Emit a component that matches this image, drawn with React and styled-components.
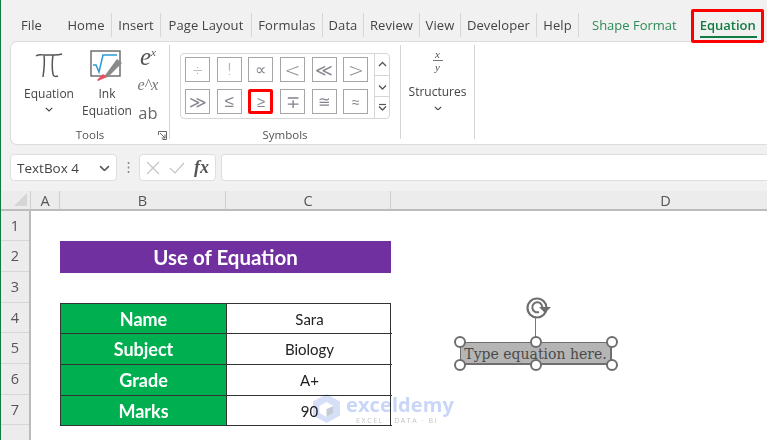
import React from "react";
import styled, { createGlobalStyle } from "styled-components";

const Global = createGlobalStyle`
  html, body {
    margin: 0;
    padding: 0;
    background: #f1f1f1;
    overflow: hidden;
  }
  * {
    box-sizing: border-box;
  }
`;

const tabs = [
  { label: "File", width: 59 },
  { label: "Home", width: 51, sep: true },
  { label: "Insert", width: 49, sep: true },
  { label: "Page Layout", width: 91, sep: true },
  { label: "Formulas", width: 71, sep: true },
  { label: "Data", width: 41, sep: true },
  { label: "Review", width: 56, sep: true },
  { label: "View", width: 41, sep: true },
  { label: "Developer", width: 76, sep: true },
  { label: "Help", width: 42, sep: true },
];

const symbols = [
  { s: "÷", size: 14 },
  { s: "!", size: 15 },
  { s: "∝", size: 16 },
  { s: "<", size: 19 },
  { s: "≪", size: 17 },
  { s: ">", size: 19 },
  { s: "≫", size: 17 },
  { s: "≤", size: 17 },
  { s: "≥", size: 15, hot: true },
  { s: "∓", size: 17 },
  { s: "≅", size: 15 },
  { s: "≈", size: 14 },
];
const rowHeights = [30, 31, 31, 30, 31, 31, 30, 20];
const columns = [
  { label: "A", width: 29 },
  { label: "B", width: 166 },
  { label: "C", width: 165 },
  { label: "D", width: 550 },
];
const tableRows = [
  ["Name", "Sara"],
  ["Subject", "Biology"],
  ["Grade", "A+"],
  ["Marks", "90"],
];

const Page = styled.div`
  width: 767px;
  height: 440px;
  overflow: hidden;
  position: relative;
  border-left: 1px solid #107c41;
  background: #f1f1f1;
  font-family: "Open Sans", "Liberation Sans", sans-serif;
  color: #444;
`;

const TabBar = styled.div`
  height: 41px;
  display: flex;
  align-items: flex-end;
  padding-left: 1px;
  padding-bottom: 4px;
`;

const Tab = styled.div`
  width: ${(p) => p.$w}px;
  height: 24px;
  flex: none;
  display: flex;
  align-items: center;
  justify-content: center;
  font-size: 13px;
  letter-spacing: 0.1px;
  white-space: nowrap;
  border-right: ${(p) => (p.$sep ? "1px solid #d6d6d6" : "none")};
`;

const ContextTab = styled.div`
  margin-left: ${(p) => p.$gap}px;
  height: 24px;
  position: relative;
  display: flex;
  align-items: center;
  font-size: 13px;
  color: #2e8b57;
  white-space: nowrap;
`;

const ActiveTab = styled(ContextTab)`
  color: #107c41;
  font-weight: 600;
  &::after {
    content: "";
    position: absolute;
    left: 0;
    right: -1px;
    bottom: -1px;
    height: 2px;
    background: #107c41;
  }
`;

const RedBox = styled.div`
  position: absolute;
  left: 690px;
  top: 9px;
  width: 73px;
  height: 34px;
  border: 3px solid #f00;
  border-radius: 2px;
`;

const Ribbon = styled.div`
  height: 104px;
  margin-left: 9px;
  background: #fff;
  border: 1px solid #dcdcdc;
  border-right: none;
  border-radius: 7px 0 0 7px;
  display: flex;
  padding-top: 3px;
`;

const Group = styled.div`
  width: ${(p) => p.$w}px;
  height: 94px;
  flex: none;
  position: relative;
  border-right: 1px solid #d4d4d4;
`;

const GroupBody = styled.div`
  height: 84px;
  padding: 2px 0 0 ${(p) => p.$inset || 0}px;
  display: flex;
`;

const GroupLabel = styled.div`
  height: 10px;
  font-size: 11.5px;
  text-align: center;
  line-height: 12px;
  color: #555;
`;

const Launcher = styled.svg`
  position: absolute;
  right: 2px;
  bottom: -1px;
`;

const BigButton = styled.div`
  width: ${(p) => p.$w}px;
  display: flex;
  flex-direction: column;
  align-items: center;
  font-size: 12px;
  line-height: 17px;
  color: #444;
`;

const IconSlot = styled.div`
  height: ${(p) => p.$h}px;
  display: flex;
  align-items: ${(p) => (p.$top ? "flex-start" : "center")};
  justify-content: center;
`;

const MathStack = styled.div`
  width: 30px;
  margin: -4px 0 0 2px;
  display: flex;
  flex-direction: column;
  align-items: center;
`;

const MathItem = styled.div`
  height: 28px;
  font-family: ${(p) => (p.$plain ? '"Open Sans", sans-serif' : '"Liberation Serif", serif')};
  font-style: ${(p) => (p.$plain ? "normal" : "italic")};
  font-size: ${(p) => p.$size}px;
  color: ${(p) => p.$color};
  line-height: 28px;
  white-space: nowrap;
  sup {
    font-size: 11px;
    line-height: 0;
  }
`;

const Gallery = styled.div`
  margin: 6px 0 0 10px;
  width: 210px;
  height: 66px;
  display: flex;
  border: 1px solid #d6d6d6;
  border-radius: 4px;
`;

const SymbolGrid = styled.div`
  width: 193px;
  padding: 3px 0 0 4px;
  display: grid;
  grid-template-columns: repeat(6, 25px);
  grid-template-rows: repeat(2, 25px);
  column-gap: 6.7px;
  row-gap: 7px;
`;

const SymbolButton = styled.div`
  display: flex;
  align-items: center;
  justify-content: center;
  font-family: "DejaVu Sans", sans-serif;
  font-size: ${(p) => p.$size}px;
  font-weight: 200;
  color: #85858f;
  background: #fff;
  border: ${(p) => (p.$hot ? "3px solid #f00" : "1px solid #a6a6a6")};
  border-radius: ${(p) => (p.$hot ? 2 : 0)}px;
`;

const ScrollColumn = styled.div`
  flex: 1;
  display: flex;
  flex-direction: column;
  border-left: 1px solid #d6d6d6;
`;

const ScrollCell = styled.div`
  flex: 1;
  display: flex;
  align-items: center;
  justify-content: center;
  border-bottom: ${(p) => (p.$last ? "none" : "1px solid #d6d6d6")};
`;

const Fraction = styled.div`
  padding-top: 2px;
  display: flex;
  flex-direction: column;
  align-items: center;
  font-family: "Liberation Serif", serif;
  font-style: italic;
  font-size: 11px;
  line-height: 10px;
  color: #555;
`;

const FractionBar = styled.span`
  width: 10px;
  height: 1px;
  background: #777;
  margin: 1px 0;
`;

const FormulaBar = styled.div`
  height: 46px;
  padding: 9px 0 0 9px;
  display: flex;
  align-items: flex-start;
`;

const NameBox = styled.div`
  width: 107px;
  height: 27px;
  background: #fff;
  border: 1px solid #dedede;
  border-radius: 4px;
  display: flex;
  align-items: center;
  justify-content: space-between;
  padding: 1px 6px 0 6px;
  font-size: 13.5px;
  color: #444;
`;

const Grip = styled.div`
  width: 22px;
  height: 27px;
  display: flex;
  align-items: center;
  justify-content: center;
`;

const FxBox = styled.div`
  width: 77px;
  height: 27px;
  background: #fff;
  border: 1px solid #dedede;
  border-radius: 4px;
  display: flex;
  align-items: center;
  gap: 9px;
  padding-left: 6px;
  font-family: "Liberation Serif", serif;
  font-style: italic;
  font-weight: 700;
  font-size: 18px;
  color: #555;
`;

const FormulaInput = styled.div`
  flex: 1;
  height: 27px;
  margin-left: 5px;
  background: #fff;
  border: 1px solid #dedede;
  border-right: none;
  border-radius: 4px 0 0 4px;
`;

const ColumnHeaders = styled.div`
  height: 20px;
  display: flex;
  background: #ececec;
  border-bottom: 2px solid #bcbcbc;
`;

const Corner = styled.div`
  width: 30px;
  flex: none;
  display: flex;
  align-items: flex-end;
  justify-content: flex-end;
  padding: 0 3px 3px 0;
  border-right: 1px solid #cfcfcf;
`;

const ColumnHead = styled.div`
  width: ${(p) => p.$w}px;
  flex: none;
  text-align: center;
  font-size: 14.5px;
  line-height: 19px;
  color: #555;
  border-right: 1px solid #cfcfcf;
`;

const SheetArea = styled.div`
  display: flex;
  height: 229px;
`;

const RowHeaders = styled.div`
  width: 30px;
  flex: none;
  background: #ececec;
  border-right: 2px solid #bcbcbc;
`;

const RowHead = styled.div`
  height: ${(p) => p.$h}px;
  line-height: ${(p) => p.$h - 1}px;
  text-align: center;
  font-size: 14.5px;
  color: #555;
  border-bottom: 1px solid #d6d6d6;
`;

const Sheet = styled.div`
  flex: 1;
  background: #fff;
  padding: 30px 0 0 29px;
`;

const TitleCell = styled.div`
  width: 331px;
  height: 32px;
  background: #7030a0;
  color: #fff;
  font-family: Lato, "Open Sans", sans-serif;
  font-weight: 700;
  font-size: 20.5px;
  line-height: 32px;
  text-align: center;
`;

const DataTable = styled.div`
  margin-top: 30px;
  width: 331px;
  display: grid;
  grid-template-columns: 166px 165px;
  grid-template-rows: 30px 31px 31px 30px;
  border: 1px solid #333;
  border-bottom: none;
`;

const HeadCell = styled.div`
  background: #00b050;
  color: #fff;
  font-family: Lato, "Open Sans", sans-serif;
  font-weight: 700;
  font-size: 18px;
  display: flex;
  align-items: center;
  justify-content: center;
  border-right: 1px solid #333;
  border-bottom: 1px solid #333;
`;

const ValueCell = styled.div`
  color: #222;
  font-family: Lato, "Open Sans", sans-serif;
  font-size: 15px;
  display: flex;
  align-items: center;
  justify-content: center;
  border-bottom: 1px solid #333;
`;

const Watermark = styled.div`
  position: absolute;
  left: 311px;
  top: 393px;
  display: flex;
  gap: 5px;
  mix-blend-mode: multiply;
  pointer-events: none;
`;

const WatermarkText = styled.div`
  display: flex;
  flex-direction: column;
`;

const WatermarkName = styled.div`
  margin-top: 1px;
  font-family: "Open Sans", sans-serif;
  font-weight: 700;
  font-size: 20px;
  line-height: 22px;
  letter-spacing: 0.1px;
  color: #c9d6f8;
`;

const WatermarkTag = styled.div`
  margin: 1px 0 0 10px;
  font-family: "Open Sans", sans-serif;
  font-size: 7px;
  line-height: 8px;
  letter-spacing: 1.6px;
  color: #c4c4c4;
`;

const TextBox = styled.div`
  position: absolute;
  left: 459px;
  top: 342px;
  width: 152px;
  height: 23px;
  background: #b5b5b5;
  border: 1px solid #6f6f6f;
  border-width: 1px 2px 2px 1px;
  font-family: "DejaVu Serif", serif;
  font-size: 14px;
  line-height: 22px;
  text-align: center;
  white-space: nowrap;
  color: #4a4a4a;
`;

const Handle = styled.span`
  position: absolute;
  left: ${(p) => p.$x}px;
  top: ${(p) => p.$y}px;
  width: 12px;
  height: 12px;
  background: #fff;
  border: 2px solid #6e6e6e;
  border-radius: 50%;
`;

const RotateStem = styled.span`
  position: absolute;
  left: 534px;
  top: 317px;
  width: 1px;
  height: 25px;
  background: #777;
`;

const RotateIcon = styled.svg`
  position: absolute;
  left: 525px;
  top: 296px;
`;

const Chevron = ({ size = 8, color = "#444" }) => (
  <svg width={size} height={size * 0.6} viewBox="0 0 10 6">
    <path d="M1 1l4 4 4-4" fill="none" stroke={color} strokeWidth="1.4" />
  </svg>
);

const PiIcon = () => (
  <svg width="28" height="26" viewBox="0 0 28 26">
    <path
      d="M1 3c3-2 6-1 9-1h9c3 0 5 0 8-1M9 2c1 7 0 15-1 22M18 2c-1 7-1 14 0 19 0 2 2 3 5 2"
      fill="none"
      stroke="#555"
      strokeWidth="1.5"
    />
  </svg>
);

const InkIcon = () => (
  <svg width="34" height="32" viewBox="0 0 34 32">
    <rect x="1" y="1" width="29" height="25" fill="#fff" stroke="#666" strokeWidth="1.4" />
    <path d="M3 15h3l3 7 4-17h14" fill="none" stroke="#2b9ad6" strokeWidth="1.5" />
    <path d="M27 9l5 4-14 14-5 1z" fill="#8a8a8a" />
    <path d="M13 24l4 3-9 4-1-1z" fill="#e8515f" />
  </svg>
);

const RotateGlyph = () => (
  <RotateIcon width="27" height="24" viewBox="0 0 27 24">
    <circle cx="11" cy="12" r="9.5" fill="none" stroke="#6e6e6e" strokeWidth="2.2" />
    <path d="M16 13a5 5 0 1 0-3 3" fill="none" stroke="#6e6e6e" strokeWidth="2" />
    <path d="M13 11h12l-6 6z" fill="#6e6e6e" />
  </RotateIcon>
);

const LogoMark = () => (
  <svg width="29" height="31" viewBox="0 0 29 31">
    <path d="M14.5 1L28 8.500v14L14.500 30 1 22.500v-14z" fill="#d5dff8" />
    <path d="M14.500 9l7 4v7l-7 4-7-4v-7z" fill="#fff" />
    <path d="M14.500 16l7-3v7l-7 4z" fill="#c6ccd6" />
  </svg>
);

const ScrollIcon = ({ kind }) => (
  <svg width="9" height="9" viewBox="0 0 9 9">
    {kind === "more" && <path d="M1 1.500h7" stroke="#555" strokeWidth="1.200" />}
    <path
      d={kind === "up" ? "M1 6l3.500-3.500L8 6" : "M1 3.500l3.500 3.500L8 3.500"}
      fill="none"
      stroke="#555"
      strokeWidth="1.300"
    />
  </svg>
);

export default function App() {
  return (
    <Page>
      <Global />
      <TabBar>
        {tabs.map((t) => (
          <Tab key={t.label} $w={t.width} $sep={t.sep}>
            {t.label}
          </Tab>
        ))}
        <ContextTab $gap={13}>Shape Format</ContextTab>
        <ActiveTab $gap={23}>Equation</ActiveTab>
      </TabBar>
      <RedBox />

      <Ribbon>
        <Group $w={159}>
          <GroupBody $inset={4}>
            <BigButton $w={68}>
              <IconSlot $h={38}>
                <PiIcon />
              </IconSlot>
              <span>Equation</span>
              <IconSlot $h={15}>
                <Chevron />
              </IconSlot>
            </BigButton>
            <BigButton $w={48}>
              <IconSlot $h={38}>
                <InkIcon />
              </IconSlot>
              <span>Ink</span>
              <span>Equation</span>
            </BigButton>
            <MathStack>
              <MathItem $size={25} $color="#555">
                e<sup>x</sup>
              </MathItem>
              <MathItem $size={16} $color="#777">
                e^x
              </MathItem>
              <MathItem $plain $size={16.5} $color="#666">
                ab
              </MathItem>
            </MathStack>
          </GroupBody>
          <GroupLabel>Tools</GroupLabel>
          <Launcher width="9" height="9" viewBox="0 0 9 9">
            <path d="M.5 4V.5H8.500V8.500H4.500M2 2l5 5M7 3.500V7H3.500" fill="none" stroke="#666" />
          </Launcher>
        </Group>

        <Group $w={231}>
          <GroupBody>
            <Gallery>
              <SymbolGrid>
                {symbols.map(({ s, size, hot }) => (
                  <SymbolButton key={s} $hot={hot} $size={size}>
                    {s}
                  </SymbolButton>
                ))}
              </SymbolGrid>
              <ScrollColumn>
                <ScrollCell>
                  <ScrollIcon kind="up" />
                </ScrollCell>
                <ScrollCell>
                  <ScrollIcon kind="down" />
                </ScrollCell>
                <ScrollCell $last>
                  <ScrollIcon kind="more" />
                </ScrollCell>
              </ScrollColumn>
            </Gallery>
          </GroupBody>
          <GroupLabel>Symbols</GroupLabel>
        </Group>

        <Group $w={74}>
          <GroupBody>
            <BigButton $w={74}>
              <IconSlot $h={36} $top>
                <Fraction>
                  <span>x</span>
                  <FractionBar />
                  <span>y</span>
                </Fraction>
              </IconSlot>
              <span>Structures</span>
              <IconSlot $h={16}>
                <Chevron />
              </IconSlot>
            </BigButton>
          </GroupBody>
        </Group>
      </Ribbon>

      <FormulaBar>
        <NameBox>
          TextBox 4
          <Chevron size={11} color="#555" />
        </NameBox>
        <Grip>
          <svg width="3" height="11" viewBox="0 0 3 11">
            <path d="M1.500 0v2M1.500 4.500v2M1.500 9v2" stroke="#888" strokeWidth="1.500" />
          </svg>
        </Grip>
        <FxBox>
          <svg width="14" height="14" viewBox="0 0 14 14">
            <path d="M1 1l12 12M13 1L1 13" stroke="#c4c4c4" strokeWidth="1.200" />
          </svg>
          <svg width="16" height="12" viewBox="0 0 16 12">
            <path d="M1 6l5 5 9-10" fill="none" stroke="#c4c4c4" strokeWidth="1.200" />
          </svg>
          <span>fx</span>
        </FxBox>
        <FormulaInput />
      </FormulaBar>

      <ColumnHeaders>
        <Corner>
          <svg width="13" height="13" viewBox="0 0 13 13">
            <path d="M13 0v13H0z" fill="#d6d6d6" />
          </svg>
        </Corner>
        {columns.map((c) => (
          <ColumnHead key={c.label} $w={c.width}>
            {c.label}
          </ColumnHead>
        ))}
      </ColumnHeaders>

      <SheetArea>
        <RowHeaders>
          {rowHeights.map((h, i) => (
            <RowHead key={i} $h={h}>
              {i < 7 ? i + 1 : ""}
            </RowHead>
          ))}
        </RowHeaders>
        <Sheet>
          <TitleCell>Use of Equation</TitleCell>
          <DataTable>
            {tableRows.map(([name, value]) => (
              <React.Fragment key={name}>
                <HeadCell>{name}</HeadCell>
                <ValueCell>{value}</ValueCell>
              </React.Fragment>
            ))}
          </DataTable>
        </Sheet>
      </SheetArea>

      <Watermark>
        <LogoMark />
        <WatermarkText>
          <WatermarkName>exceldemy</WatermarkName>
          <WatermarkTag>EXCEL · DATA · BI</WatermarkTag>
        </WatermarkText>
      </Watermark>

      <RotateStem />
      <RotateGlyph />
      <TextBox>Type equation here.</TextBox>
      {[453, 529, 605].map((x) =>
        [336, 359].map((y) => <Handle key={`${x}-${y}`} $x={x} $y={y} />)
      )}
    </Page>
  );
}
